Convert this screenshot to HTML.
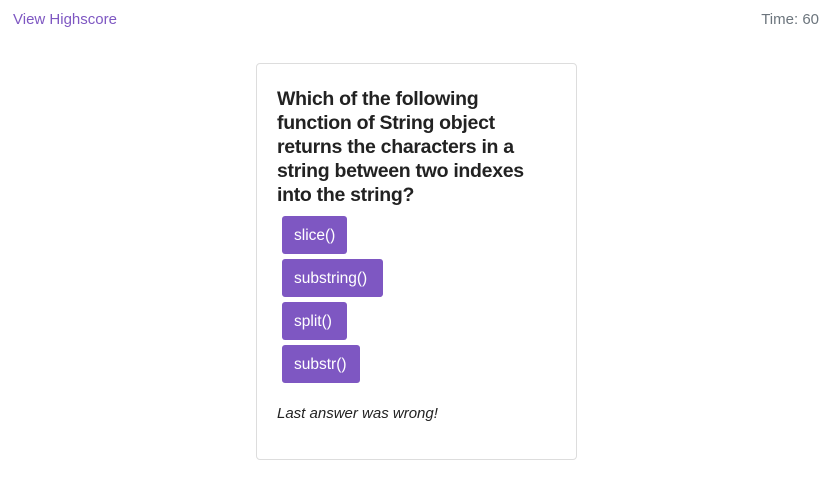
<!DOCTYPE html>
<html><head><style>
body{margin:0;width:831px;height:490px;background:#fff;font-family:"Liberation Sans",sans-serif;position:relative;overflow:hidden}
.hs{position:absolute;left:13px;top:11px;font-size:15px;color:#7e57c2}
.tm{position:absolute;right:12px;top:11px;font-size:15px;color:#6c757d}
.card{position:absolute;left:256px;top:63px;width:319px;height:395px;border:1px solid #ddd;border-radius:4px}
h2{position:absolute;left:20px;top:23px;margin:0;font-size:19.5px;line-height:24px;font-weight:bold;color:#222;letter-spacing:-0.3px}
.b{position:absolute;left:25px;height:38px;line-height:40px;padding:0 12px;background:#7e57c2;color:#fff;border-radius:3px;font-size:15.5px}
.w{position:absolute;left:20px;top:341px;font-style:italic;font-size:15px;color:#222}
</style></head><body>
<div class="hs">View Highscore</div>
<div class="tm">Time: 60</div>
<div class="card">
<h2>Which of the following<br>function of String object<br>returns the characters in a<br>string between two indexes<br>into the string?</h2>
<div class="b" style="top:152px;width:41px">slice()</div>
<div class="b" style="top:195px;width:77px">substring()</div>
<div class="b" style="top:238px;width:41px">split()</div>
<div class="b" style="top:281px;width:54px">substr()</div>
<div class="w">Last answer was wrong!</div>
</div>
</body></html>
